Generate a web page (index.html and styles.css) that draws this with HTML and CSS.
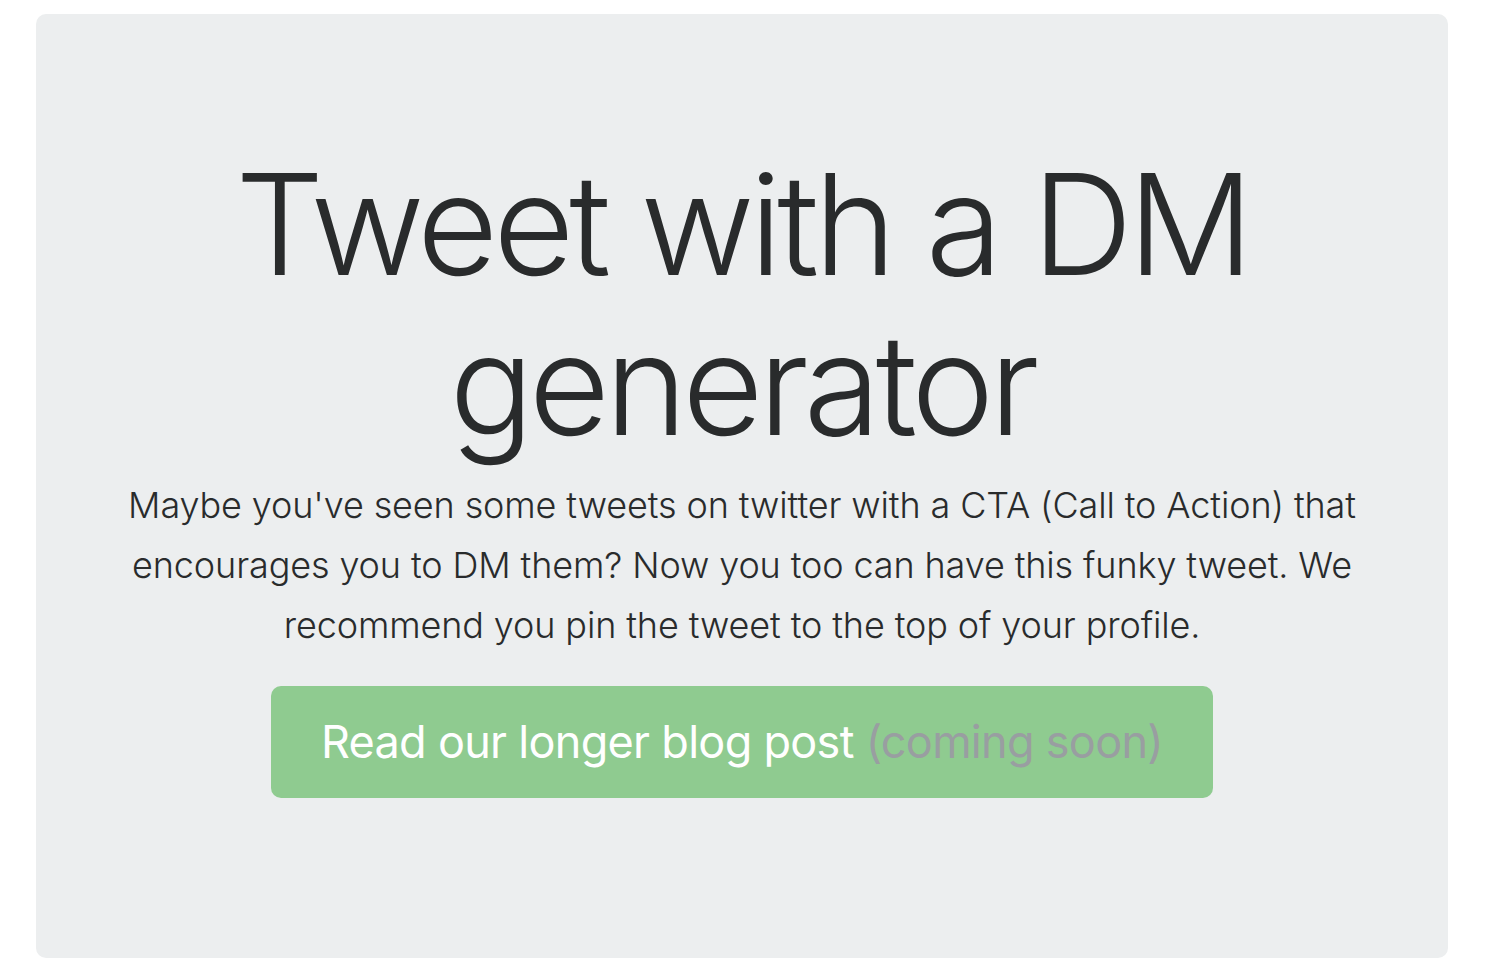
FILE: index.html
```html
<!DOCTYPE html>
<html lang="en">
<head>
    <meta charset="UTF-8">
    <meta name="viewport" content="width=device-width, initial-scale=1.0">
    <title>Tweet with a DM generator</title>
    <link rel="stylesheet" href="styles.css">
</head>
<body>
    <div class="jumbotron">
        <h1 class="display">Tweet with a DM generator</h1>
        <p class="lead">Maybe you've seen some tweets on twitter with a CTA (Call to Action) that encourages you to DM them? Now you too can have this funky tweet. We recommend you pin the tweet to the top of your profile.</p>
        <a class="btn btn-success disabled" href="#">Read our longer blog post <span class="muted">(coming soon)</span></a>
    </div>
</body>
</html>
```

FILE: styles.css
```css
body { margin: 0; padding: 14px 42px 22px 36px; font-family: Inter, "Helvetica Neue", Arial, sans-serif; color: #292b2c; background: #fff; }
.jumbotron { background-color: #eceeef; border-radius: 10px; padding: 130px 64px 160px; text-align: center; }
.display { font-size: 140px; font-weight: 300; line-height: 160px; margin: 0 0 11px; letter-spacing: -5px; }
.lead { font-size: 36px; font-weight: 300; line-height: 60px; margin: 0 auto 31px; max-width: 1240px; letter-spacing: -0.12px; }
.btn { display: inline-block; padding: 22px 50px; font-size: 45px; line-height: 68px; border-radius: 10px; text-decoration: none; letter-spacing: -0.7px; }
.btn-success { background-color: #5cb85c; color: #fff; }
.btn.disabled { background-color: #8fcb90; pointer-events: none; }
.muted { color: #999ea1; }
```
